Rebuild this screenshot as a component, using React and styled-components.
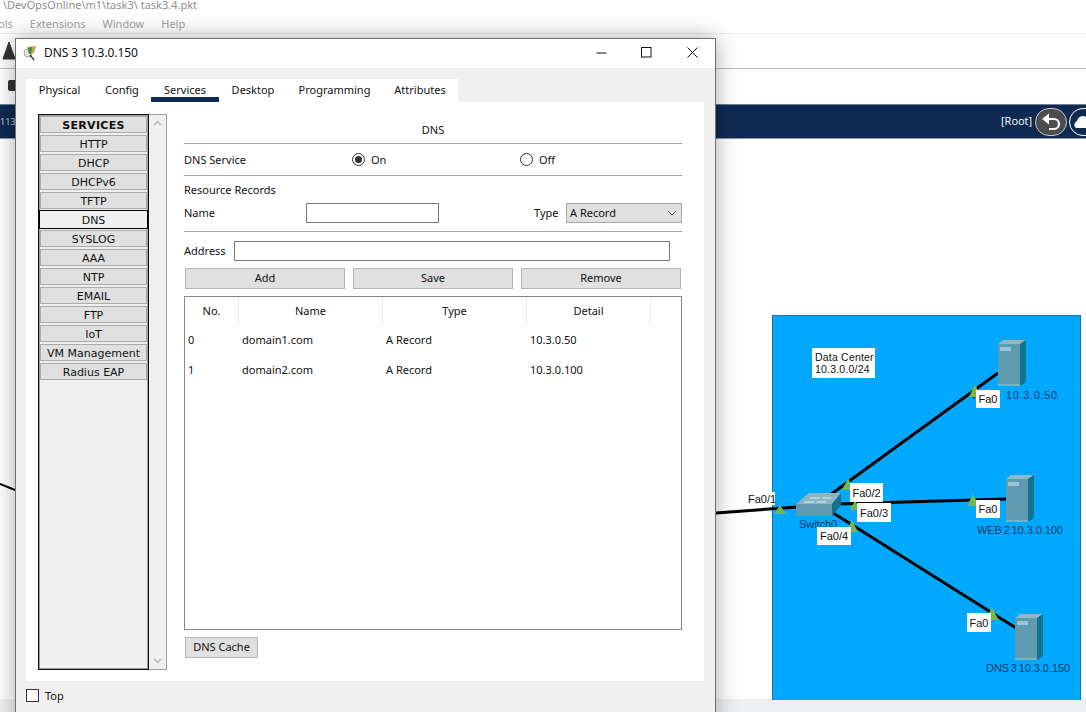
import React from "react";
import styled, { createGlobalStyle } from "styled-components";

const Global = createGlobalStyle`
  html, body { margin: 0; padding: 0; background: #fff; }
  body { font-family: "Noto Sans", sans-serif; overflow: hidden; }
  * { box-sizing: border-box; }
`;

const Page = styled.div`
  position: relative; width: 1086px; height: 712px; overflow: hidden;
  display: flex; flex-direction: column; background: #fff;
`;
const PathLine = styled.div`
  height: 9px; padding-left: 3px; font-size: 11px; line-height: 9px; color: #8f8f8f; white-space: nowrap;
  margin-bottom: 5px;
`;
const MenuBar = styled.div`
  height: 20px; display: flex; font-size: 11px; line-height: 20px; color: #a0a0a0;
  border-bottom: 1px solid #ececec; gap: 17px; margin-left: -2px;
`;
const Toolbar = styled.div`
  height: 35px; display: flex; align-items: center; border-bottom: 1px solid #bdbdbd; padding-left: 2px;
`;
const SubToolbar = styled.div`
  height: 35px; display: flex; align-items: center; padding: 0 0 3px 8px;
`;
const Stub = styled.div`width: 10px; height: 11px; background: #333; border-radius: 2px;`;
const NavBar = styled.div`
  height: 35px; flex: none; background: #0f2a52; display: flex; align-items: center; color: #fff; font-family: "Open Sans", sans-serif;
  font-size: 11px; border-top: 1px solid #6d7f98; border-bottom: 1px solid #8a97a8; overflow: hidden;
`;
const Crumb = styled.span`flex: none; font-size: 9px; width: 1001px; color: #cfd6e0;`;
const RootText = styled.span`flex: none; font-size: 11px; width: 34px; padding-bottom: 2px;`;
const RoundButton = styled.div`
  flex: none; width: 32px; height: 28px; border-radius: 14px; border: 1px solid ${p => p.$dark ? "#c8c8c8" : "#fff"};
  background: ${p => p.$dark ? "#4c4c4c" : "#0f2a52"}; margin-right: 2px; display: flex; align-items: center;
  justify-content: ${p => p.$dark ? "center" : "flex-start"}; padding-left: ${p => p.$dark ? 0 : 4}px;
`;
const Canvas = styled.div`position: relative; height: 560px; flex: none;`;
const StatusBar = styled.div`flex: 1; background: #eff0f1;`;
const Cloud = styled.div`
  position: absolute; left: 772px; top: 176px; width: 309px; height: 385px; background: #00a8ff;
  border: 1px solid #1b6f9c; border-bottom: 0;
`;
const Wires = styled.svg`position: absolute; left: 0; top: 0; width: 1086px; height: 560px;`;
const Tag = styled.div`
  position: absolute; left: ${p => p.$x}px; top: ${p => p.$y - 139}px; width: ${p => p.$w}px; height: ${p => p.$h}px;
  background: #fff; color: #111; font-family: "Liberation Sans", sans-serif; font-size: 11px;
  display: flex; align-items: center; justify-content: center;
`;
const NoteBox = styled(Tag)`
  display: block; padding: 3px 0 0 3px; font-size: 10.5px; line-height: 12px; white-space: pre; letter-spacing: .2px;
`;
const NodeName = styled.div`
  position: absolute; left: ${p => p.$x}px; top: ${p => p.$y - 139}px; color: #0b3a66; white-space: nowrap;
  font-family: "Liberation Sans", sans-serif; font-size: 11px; line-height: 13px; letter-spacing: -.06px; word-spacing: -1.2px;
`;
const WideName = styled(NodeName)`letter-spacing: .65px;`;

const Dialog = styled.div`
  position: absolute; left: 15px; top: 38px; width: 701px; height: 690px; background: #f0f0f0;
  border: 1px solid #6f6f6f; box-shadow: 0 0 22px rgba(0,0,0,.32); display: flex; flex-direction: column;
`;
const TitleBar = styled.div`
  height: 29px; flex: none; background: #fff; display: flex; align-items: center; padding: 0 0 2px 7px; font-size: 12px; color: #111;
`;
const TitleText = styled.span`margin-left: 5px; flex: 1; letter-spacing: -.1px;`;
const WinButton = styled.div`
  width: 45.5px; height: 27px; display: flex; align-items: center; justify-content: center;
`;
const Body = styled.div`padding: 11px 11px 0 10px; flex: 1; display: flex; flex-direction: column;`;
const Tabs = styled.div`
  display: grid; grid-template-columns: 67px 58px 68px 68px 95px 76px; width: 432px; height: 23px; background: #fff;
`;
const Tab = styled.div`
  font-size: 11px; color: #111; text-align: center; line-height: 22px;
  border-bottom: ${p => p.$active ? "5px solid #0f2a52" : "0"}; height: 23px;
`;
const Panel = styled.div`
  width: 678px; height: 579px; background: #fff; padding: 12px 0 0 12px; display: flex; gap: 17px;
`;
const Side = styled.div`display: flex; height: 556px; width: 129px;`;
const SideList = styled.div`
  width: 111px; border: 1px solid #111; outline: 1px solid rgba(0,0,0,.35); outline-offset: -2px; background: #f0f0f0; padding: 1px;
  display: flex; flex-direction: column; gap: 2px; 
`;
const SideItem = styled.div`
  flex: none; height: ${p => p.$active ? 19 : 17}px; margin: ${p => p.$active ? "-1px" : "0"}; padding-top: 1px;
  background: ${p => p.$active ? "#f0f0f0" : "#e0e0e0"}; border: 1px solid ${p => p.$active ? "#000" : "#ababab"};
  font-family: "DejaVu Sans", sans-serif; font-size: 11px; font-weight: ${p => p.$head ? 700 : 400};
  letter-spacing: ${p => p.$head ? ".3px" : "0"};
  color: #111; display: flex; align-items: center; justify-content: center; white-space: nowrap;
`;
const Scroll = styled.div`
  width: 18px; background: #f0f0f0; border: 1px solid #a0a0a0; border-left: 0; display: flex; flex-direction: column;
  justify-content: space-between; align-items: center; padding: 5px 0;
`;
const Main = styled.div`width: 498px; display: flex; flex-direction: column; font-size: 11px; color: #111;`;
const Heading = styled.div`
  height: 30px; text-align: center; border-bottom: 1px solid #a0a0a0; padding-top: 8px; line-height: 16px;
`;
const ServiceRow = styled.div`
  height: 32px; display: grid; grid-template-columns: 168px 168px 1fr; align-items: center; border-bottom: 1px solid #a0a0a0;
`;
const Radio = styled.label`display: flex; align-items: center; gap: 6px;`;
const Dot = styled.span`
  width: 13px; height: 13px; border-radius: 50%; border: 1px solid #333; background: #fff; display: flex; align-items: center; justify-content: center;
  &::after { content: ""; width: 7px; height: 7px; border-radius: 50%; background: ${p => p.$on ? "#333" : "transparent"}; }
`;
const Label = styled.div`line-height: 16px;`;
const RecordsTitle = styled(Label)`height: 27px; padding-top: 6px;`;
const NameRow = styled.div`
  height: 29px; display: flex; align-items: flex-start; border-bottom: 1px solid #a0a0a0;
`;
const NameLabel = styled(Label)`width: 122px; line-height: 20px;`;
const Field = styled.div`
  height: 20px; width: ${p => p.$w}px; border: 1px solid #777; background: #fff; flex: none;
`;
const TypeLabel = styled(Label)`width: 32px; margin-left: 95px; line-height: 20px;`;
const Select = styled.div`
  width: 116px; height: 20px; background: #e0e0e0; border: 1px solid #a8a8a8; padding: 0 4px 1px 3px; display: flex;
  align-items: center; justify-content: space-between;
`;
const AddressRow = styled.div`
  margin-top: 9px; height: 20px; display: flex; gap: 0; align-items: center;
`;
const AddressLabel = styled(Label)`width: 50px;`;
const Buttons = styled.div`
  margin: 7px 1px 0; display: grid; grid-template-columns: repeat(3, 160px); gap: 8px;
`;
const Btn = styled.div`
  height: 21px; padding-bottom: 2px; background: #e0e0e0; border: 1px solid #b4b4b4; display: flex; align-items: center; justify-content: center;
`;
const TableBox = styled.div`
  margin-top: 7px; height: 334px; border: 1px solid #8a8a8a; background: #fff; 
`;
const Row = styled.div`
  display: grid; grid-template-columns: 54px 144px 144px 124px 1fr; height: ${p => p.$head ? 28 : 30}px; align-items: center;
`;
const HeadCell = styled.div`
  height: 28px; line-height: 28px; text-align: center; border-right: 1px solid #ececec;
  &:last-child { border-right: 0; }
`;
const Cell = styled.div`padding: 0 0 2px 3px;`;
const CacheBtn = styled(Btn)`margin: 7px 0 0 1px; width: 73px;`;
const Footer = styled.div`display: flex; align-items: center; gap: 6px; height: 28px; font-size: 11px; color: #111;`;
const Check = styled.div`width: 13px; height: 13px; border: 1px solid #333; background: #fff;`;

const tri = (x, y, w = 11, h = 11) => `${x - w / 2},${y + h} ${x},${y} ${x + w / 2},${y + h}`;

const Server = ({ x, y, w = 28, h = 46 }) => (
  <g transform={`translate(${x} ${y - 139})`}>
    <polygon points={`0,4 5,0 ${w},0 ${w - 6},4`} fill="#8db8c6" />
    <polygon points={`${w - 6},4 ${w},0 ${w},${h - 4} ${w - 6},${h}`} fill="#0e7490" />
    <rect x="0" y="4" width={w - 6} height={h - 4} fill="#5f9bb0" />
    <rect x="0" y={h - 2} width={w - 6} height="2" fill="#7fb0c0" />
    <rect x="2" y="7" width="11" height="4" fill="#9cc6d3" />
  </g>
);

const services = ["HTTP", "DHCP", "DHCPv6", "TFTP", "DNS", "SYSLOG", "AAA", "NTP", "EMAIL", "FTP", "IoT", "VM Management", "Radius EAP"];

export default function App() {
  return (
    <Page>
      <Global />
      <PathLine>\DevOpsOnline\m1\task3\ task3.4.pkt</PathLine>
      <MenuBar>
        <span>ols</span><span>Extensions</span><span>Window</span><span>Help</span>
      </MenuBar>
      <Toolbar>
        <svg width="14" height="20" viewBox="0 0 14 20"><path d="M7 1 L1 18 H13 Z M7 6v12" fill="#333" stroke="#333" /></svg>
      </Toolbar>
      <SubToolbar><Stub /></SubToolbar>
      <NavBar>
        <Crumb>113</Crumb>
        <RootText>[Root]</RootText>
        <RoundButton $dark>
          <svg width="24" height="22" viewBox="0 0 24 22">
            <path d="M3 8 L10 2.5 V13.5 Z" fill="#fff" />
            <path d="M9 8 H15 a4.7 4.7 0 0 1 0 10 H10" fill="none" stroke="#fff" strokeWidth="2.2" />
          </svg>
        </RoundButton>
        <RoundButton>
          <svg width="24" height="16" viewBox="0 0 24 16"><path d="M2 14 a4 4 0 0 1 1-7 a6 6 0 0 1 11-2 a5 5 0 0 1 8 9 Z" fill="#fff" /></svg>
        </RoundButton>
      </NavBar>
      <Canvas>
        <Cloud />
        <NodeName $x={971} $y={389}>W</NodeName>
        <WideName $x={1006} $y={389}>10.3.0.50</WideName>
        <NodeName $x={977} $y={524}>WEB 2 10.3.0.100</NodeName>
        <NodeName $x={986} $y={662}>DNS 3 10.3.0.150</NodeName>
        <NodeName $x={799} $y={518}>Switch0</NodeName>
        <Wires viewBox="0 0 1086 560">
          <g stroke="#000" strokeWidth="3" fill="none">
            <path d="M0 345 L15 351" strokeWidth="2" />
            <path d="M716 374 L797 368" />
            <path d="M830 356 L998 234" />
            <path d="M838 365 L1006 360" />
            <path d="M830 372 L1016 489" />
          </g>
          <g fill="#72b84a">
            <polygon points={tri(780, 366, 12, 9)} />
            <polygon points={tri(848, 339, 12, 12)} />
            <polygon points={tri(855, 362, 11, 9)} />
            <polygon points={tri(973, 355, 12, 12)} />
            <polygon points={tri(975, 245, 12, 13)} />
            <polygon points={tri(852, 381, 12, 12)} />
            <polygon points={tri(992, 468, 13, 13)} />
          </g>
          <Server x={998} y={340} />
          <Server x={1006} y={475} h={47} />
          <Server x={1015} y={614} />
          <g transform="translate(796 354)">
            <polygon points="0,11 13,0 45,0 36,11" fill="#8db4c2" />
            <polygon points="36,11 45,0 45,12 36,23" fill="#12708c" />
            <rect x="0" y="11" width="36" height="12" fill="#5f9bb0" />
            <path d="M14 5 h10 M26 5 h9 M8 9 h10 M21 9 h9" stroke="#e4eff3" strokeWidth="1" />
          </g>
        </Wires>
        <NoteBox $x={812} $y={348} $w={63} $h={30}>{"Data Center\n10.3.0.0/24"}</NoteBox>
        <Tag $x={749} $y={492} $w={26} $h={13}>Fa0/1</Tag>
        <Tag $x={850} $y={483} $w={33} $h={19}>Fa0/2</Tag>
        <Tag $x={857} $y={503} $w={34} $h={19}>Fa0/3</Tag>
        <Tag $x={817} $y={527} $w={34} $h={18}>Fa0/4</Tag>
        <Tag $x={976} $y={390} $w={24} $h={18}>Fa0</Tag>
        <Tag $x={976} $y={500} $w={24} $h={18}>Fa0</Tag>
        <Tag $x={967} $y={613} $w={24} $h={19}>Fa0</Tag>
      </Canvas>
      <StatusBar />

      <Dialog>
        <TitleBar>
          <svg width="16" height="16" viewBox="0 0 16 16">
            <circle cx="5" cy="8" r="4" fill="#dfe6df" stroke="#9aa6a0" />
            <path d="M4 2 L13 1 L11 8 L6 9 Z" fill="#c9a24a" />
            <path d="M5 3 L9 2 L8 9 L6 9 Z" fill="#2f8f3a" />
            <path d="M7 10 L11 15" stroke="#333" strokeWidth="1.3" />
          </svg>
          <TitleText>DNS 3 10.3.0.150</TitleText>
          <WinButton><svg width="11" height="11" viewBox="0 0 11 11"><path d="M0.5 6H10.5" stroke="#111" /></svg></WinButton>
          <WinButton><svg width="11" height="11" viewBox="0 0 11 11"><rect x=".5" y=".5" width="9.5" height="9.5" fill="none" stroke="#111" /></svg></WinButton>
          <WinButton><svg width="11" height="11" viewBox="0 0 11 11"><path d="M.5 .5L10.5 10.5M10.5 .5L.5 10.5" stroke="#111" /></svg></WinButton>
        </TitleBar>
        <Body>
          <Tabs>
            <Tab>Physical</Tab>
            <Tab>Config</Tab>
            <Tab $active>Services</Tab>
            <Tab>Desktop</Tab>
            <Tab>Programming</Tab>
            <Tab>Attributes</Tab>
          </Tabs>
          <Panel>
            <Side>
              <SideList>
                <SideItem $head>SERVICES</SideItem>
                {services.map(s => <SideItem key={s} $active={s === "DNS"}>{s}</SideItem>)}
              </SideList>
              <Scroll>
                <svg width="9" height="6" viewBox="0 0 9 6"><path d="M1 5L4.500 1.500L8 5" fill="none" stroke="#b5b5b5" strokeWidth="1.500" /></svg>
                <svg width="9" height="6" viewBox="0 0 9 6"><path d="M1 1L4.500 4.500L8 1" fill="none" stroke="#b5b5b5" strokeWidth="1.500" /></svg>
              </Scroll>
            </Side>
            <Main>
              <Heading>DNS</Heading>
              <ServiceRow>
                <Label>DNS Service</Label>
                <Radio><Dot $on /><span>On</span></Radio>
                <Radio><Dot /><span>Off</span></Radio>
              </ServiceRow>
              <RecordsTitle>Resource Records</RecordsTitle>
              <NameRow>
                <NameLabel>Name</NameLabel>
                <Field $w={133} />
                <TypeLabel>Type</TypeLabel>
                <Select>
                  <span>A Record</span>
                  <svg width="10" height="6" viewBox="0 0 10 6"><path d="M1 1L5 5L9 1" fill="none" stroke="#555" /></svg>
                </Select>
              </NameRow>
              <AddressRow>
                <AddressLabel>Address</AddressLabel>
                <Field $w={436} />
              </AddressRow>
              <Buttons>
                <Btn>Add</Btn><Btn>Save</Btn><Btn>Remove</Btn>
              </Buttons>
              <TableBox>
                <Row $head>
                  <HeadCell>No.</HeadCell><HeadCell>Name</HeadCell><HeadCell>Type</HeadCell><HeadCell>Detail</HeadCell><HeadCell />
                </Row>
                <Row><Cell>0</Cell><Cell>domain1.com</Cell><Cell>A Record</Cell><Cell>10.3.0.50</Cell></Row>
                <Row><Cell>1</Cell><Cell>domain2.com</Cell><Cell>A Record</Cell><Cell>10.3.0.100</Cell></Row>
              </TableBox>
              <CacheBtn>DNS Cache</CacheBtn>
            </Main>
          </Panel>
          <Footer><Check /><span>Top</span></Footer>
        </Body>
      </Dialog>
    </Page>
  );
}
